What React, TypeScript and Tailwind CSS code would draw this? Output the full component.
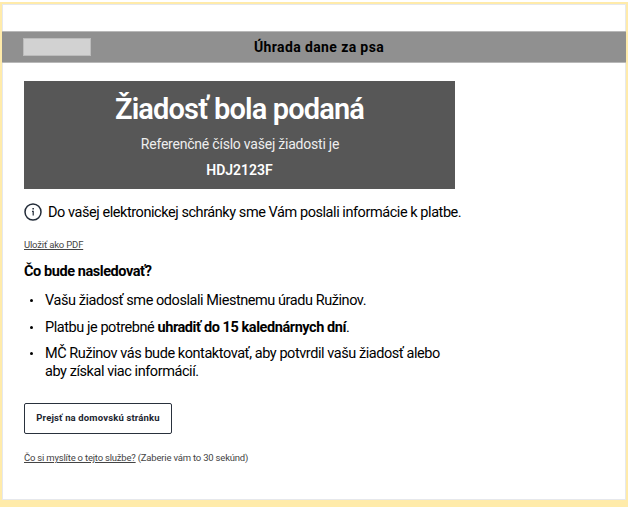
import type { ReactNode } from "react";

function Bullet({ children }: { children: ReactNode }) {
  return (
    <li className="flex">
      <span className="ml-[6px] mt-[7px] size-[3px] shrink-0 rounded-full bg-black" />
      <span className="ml-[12px] whitespace-nowrap">{children}</span>
    </li>
  );
}

export default function App() {
  return (
    <div className="h-[509px] w-[630px] overflow-hidden bg-white pt-[2px] font-['Roboto',sans-serif] text-black">
      <div className="h-[505px] w-[628px] bg-[#ffebaa] px-[2px] pt-[2px]">
        <main className="h-[496px] w-[624px] border border-[#e6e8ec] bg-white">
          <header className="-mx-px mt-[26px] flex h-[32px] items-center border-y border-[#b8b8b8] bg-[#909090]">
            <div className="ml-[21px] h-[18px] w-[68px] border border-[#bcbcbc] bg-[#d2d2d2]" />
            <h1 className="ml-[163px] whitespace-nowrap text-[14px] font-bold leading-none tracking-[0.38px]">
              Úhrada dane za psa
            </h1>
          </header>
          <div className="ml-[21px] pt-[18px]">
            <section className="flex h-[108px] w-[431px] flex-col items-center whitespace-nowrap bg-[#575757] text-white">
              <h2 className="mt-[10px] text-[29px] font-semibold leading-[36px] tracking-[-0.85px]">Žiadosť bola podaná</h2>
              <p className="ml-[1px] mt-[8px] text-[14px] leading-[18px] tracking-[-0.22px] text-[#eeeeee]">Referenčné číslo vašej žiadosti je</p>
              <p className="mt-[8px] text-[14px] font-semibold leading-[18px]">HDJ2123F</p>
            </section>
            <div className="mt-[13px] flex h-[20px] items-center">
              <svg className="size-[18px]" viewBox="0 0 18 18" fill="none" stroke="#222b38" strokeWidth="1.5">
                <circle cx="9" cy="9" r="8" />
                <path d="M8 8.3h1.2v4.2" strokeWidth="1.2" />
                <path d="M8.4 5.8h1.5" />
              </svg>
              <p className="ml-[6px] mt-px whitespace-nowrap text-[14.5px] leading-[20px] tracking-[-0.44px]">
                Do vašej elektronickej schránky sme Vám poslali informácie k platbe.
              </p>
            </div>
            <a className="mt-[17px] block w-fit whitespace-nowrap text-[9.5px] leading-[12px] tracking-[-0.18px] text-[#444] underline">Uložiť ako PDF</a>
            <h3 className="mt-[11px] whitespace-nowrap text-[14.5px] font-bold leading-[20px] tracking-[-0.43px]">Čo bude nasledovať?</h3>
            <ul className="mt-[10px] flex flex-col gap-[9px] text-[14.5px] leading-[17.5px] tracking-[-0.44px]">
              <Bullet>Vašu žiadosť sme odoslali Miestnemu úradu Ružinov.</Bullet>
              <Bullet>Platbu je potrebné <b className="tracking-[-0.43px]">uhradiť do 15 kalednárnych dní</b>.</Bullet>
              <Bullet>MČ Ružinov vás bude kontaktovať, aby potvrdil vašu žiadosť alebo<br />aby získal viac informácií.</Bullet>
            </ul>
            <button className="mt-[23px] flex h-[31px] w-[148px] items-center justify-center whitespace-nowrap rounded-[2px] border border-[#29313d] pb-[2px] text-[9.5px] font-bold leading-none tracking-[0.15px] text-[#1c2530]">
              Prejsť na domovskú stránku
            </button>
            <p className="mt-[18px] whitespace-nowrap text-[9.5px] leading-[12px] tracking-[-0.2px] text-[#444]">
              <a className="underline">Čo si myslíte o tejto službe?</a> (Zaberie vám to 30 sekúnd)
            </p>
          </div>
        </main>
      </div>
    </div>
  );
}
